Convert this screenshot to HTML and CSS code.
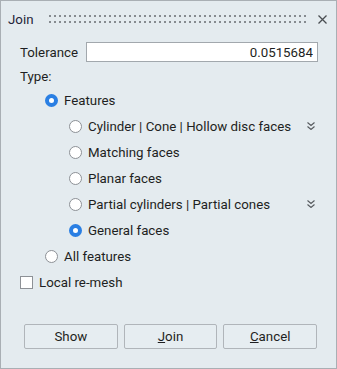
FILE: index.html
```html
<!DOCTYPE html>
<html lang="en">

<head>
    <meta charset="UTF-8">
    <title>Join</title>
    <link rel="stylesheet" href="styles.css">
</head>

<body>
    <div class="dialog">
        <div class="titlebar">
            <span class="title">Join</span>
            <span class="grip"></span>
            <span class="close">
                <svg width="9" height="9" viewBox="0 0 9 9"><path d="M0.5 0.5 L8.5 8.5 M8.5 0.5 L0.5 8.5" stroke="#4a4e52" stroke-width="1.3" fill="none"/></svg>
            </span>
        </div>

        <div class="content">
            <div class="row tol-row">
                <label for="tol">Tolerance</label>
                <input type="text" id="tol" class="tol-input" value="0.0515684">
            </div>

            <div class="row">Type:</div>

            <div class="row lvl1 feat-row"><span class="radio on"></span>Features</div>

            <div class="row lvl2">
                <span class="radio"></span>Cylinder | Cone | Hollow disc faces
                <span class="more">
                    <svg width="8" height="8" viewBox="0 0 8 8"><path d="M0.5 0.5 L4 3.5 L7.5 0.5 M0.5 4.5 L4 7.5 L7.5 4.5" stroke="#55595d" stroke-width="1.1" fill="none"/></svg>
                </span>
            </div>
            <div class="row lvl2"><span class="radio"></span>Matching faces</div>
            <div class="row lvl2"><span class="radio"></span>Planar faces</div>
            <div class="row lvl2">
                <span class="radio"></span>Partial cylinders | Partial cones
                <span class="more">
                    <svg width="8" height="8" viewBox="0 0 8 8"><path d="M0.5 0.5 L4 3.5 L7.5 0.5 M0.5 4.5 L4 7.5 L7.5 4.5" stroke="#55595d" stroke-width="1.1" fill="none"/></svg>
                </span>
            </div>
            <div class="row lvl2"><span class="radio on"></span>General faces</div>

            <div class="row lvl1"><span class="radio"></span>All features</div>

            <div class="row"><span class="check"></span>Local re-mesh</div>

            <div class="buttons">
                <button class="btn">Show</button>
                <button class="btn"><u>J</u>oin</button>
                <button class="btn"><u>C</u>ancel</button>
            </div>
        </div>
    </div>
</body>

</html>
```

FILE: styles.css
```css
* {
    margin: 0;
    padding: 0;
    box-sizing: border-box;
}

body {
    font-family: Roboto, 'Liberation Sans', sans-serif;
    font-size: 13.3px;
    color: #1e1f22;
    background: #e4ebef;
}

.dialog {
    width: 337px;
    height: 369px;
    border: 1px solid #a9afb4;
    background-color: #e4ebef;
    display: flex;
    flex-direction: column;
}

.titlebar {
    height: 36px;
    display: flex;
    align-items: center;
    padding: 0 9px 0 7px;
}

.title {
    color: #24243a;
}

/* dotted drag handle: 2x2 dots, 5px apart, two rows */
.grip {
    flex: 1;
    height: 8px;
    margin: 0 11px 0 15px;
    background-image: linear-gradient(90deg, #868b90 2px, transparent 2px);
    background-size: 5px 6px;
    -webkit-mask-image: linear-gradient(180deg, #000 2px, transparent 2px);
    -webkit-mask-size: 5px 6px;
    mask-image: linear-gradient(180deg, #000 2px, transparent 2px);
    mask-size: 5px 6px;
}

.close {
    display: flex;
    width: 9px;
    height: 9px;
}

.content {
    flex: 1;
    display: flex;
    flex-direction: column;
    padding: 3px 18px 19px 19px;
}

.row {
    display: flex;
    align-items: center;
    height: 26px;
    white-space: nowrap;
}

.tol-row,
.tol-row + .row {
    height: 24px;
}

.feat-row {
    height: 25px;
}

.tol-row label {
    width: 66px;
}

.tol-input {
    flex: 1;
    height: 20px;
    border: 1px solid #a2a8ad;
    background-color: #ffffff;
    font-family: inherit;
    font-size: 13.3px;
    color: #1e1f22;
    text-align: right;
    padding: 0 4px 0 4px;
    outline: none;
}

.lvl1 {
    padding-left: 25px;
}

.lvl2 {
    padding-left: 49px;
}

.radio {
    width: 13px;
    height: 13px;
    border-radius: 50%;
    border: 1px solid #8d9196;
    background-color: #ffffff;
    margin-right: 6px;
    flex-shrink: 0;
}

.radio.on {
    border: 4px solid #2a7fe3;
    background-color: #ffffff;
}

.check {
    width: 13px;
    height: 13px;
    border: 1px solid #8d9196;
    background-color: #ffffff;
    margin-right: 6px;
}

.more {
    margin-left: auto;
    margin-right: 3px;
    display: flex;
}

.buttons {
    margin-top: auto;
    display: flex;
    gap: 6px;
    padding: 0 1px 0 4px;
}

.btn {
    flex: 1;
    height: 25px;
    border: 1px solid #b0b5ba;
    border-radius: 2px;
    background-color: #e6edf1;
    font-family: inherit;
    font-size: 13.3px;
    color: #1e1f22;
}
```
